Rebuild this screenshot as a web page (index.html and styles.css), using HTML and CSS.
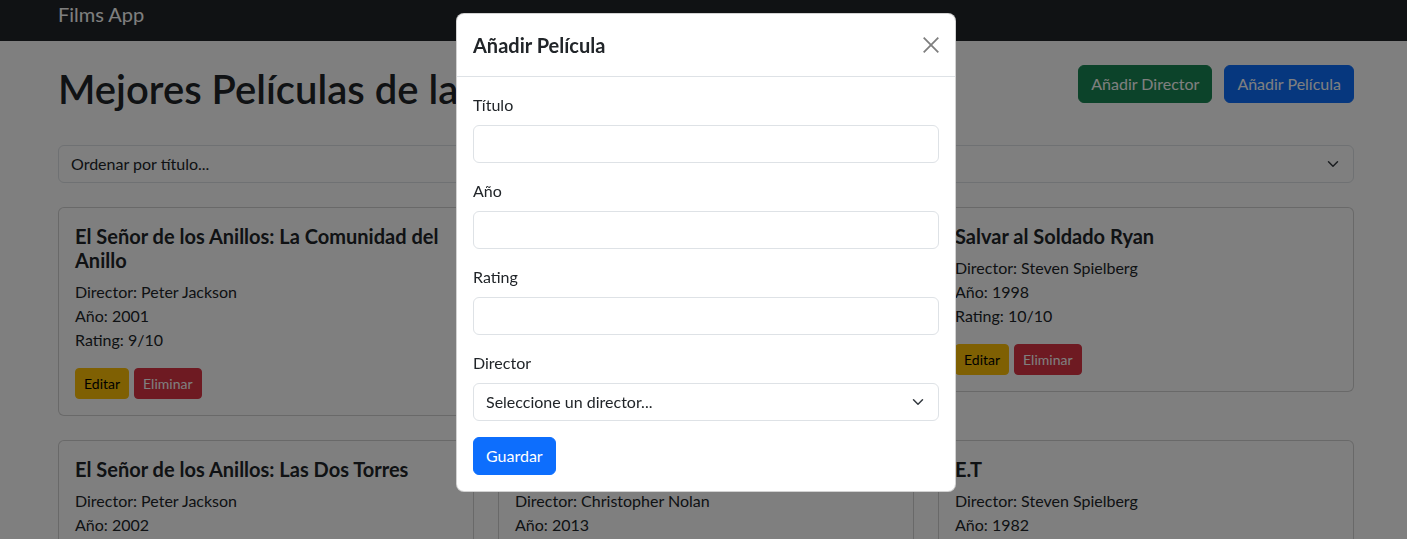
FILE: index.html
```html
<!DOCTYPE html>
<html lang="es">
<head>
<meta charset="utf-8">
<title>Films App</title>
<link rel="stylesheet" href="styles.css">
</head>
<body>
<nav class="navbar">
  <div class="container">
    <span class="brand">Films App</span>
  </div>
</nav>

<main class="container page">
  <div class="header-row">
    <h1 class="page-title">Mejores Películas de la Historia</h1>
    <div class="actions">
      <button class="btn btn-success">Añadir Director</button>
      <button class="btn btn-primary">Añadir Película</button>
    </div>
  </div>

  <div class="form-select sort-select">
    <span>Ordenar por título...</span>
    <svg class="chevron" viewBox="0 0 16 16" width="16" height="12"><path fill="none" stroke="#343a40" stroke-linecap="round" stroke-linejoin="round" stroke-width="2" d="m2 5 6 6 6-6"/></svg>
  </div>

  <div class="films">
    <div class="card">
      <h5 class="card-title">El Señor de los Anillos: La Comunidad del Anillo</h5>
      <div class="card-info">
        <p>Director: Peter Jackson</p>
        <p>Año: 2001</p>
        <p>Rating: 9/10</p>
      </div>
      <div class="card-actions">
        <button class="btn btn-sm btn-warning">Editar</button>
        <button class="btn btn-sm btn-danger">Eliminar</button>
      </div>
    </div>
    <div class="card">
      <h5 class="card-title">El Padrino</h5>
      <div class="card-info">
        <p>Director: Francis Ford Coppola</p>
        <p>Año: 1972</p>
        <p>Rating: 10/10</p>
      </div>
      <div class="card-actions">
        <button class="btn btn-sm btn-warning">Editar</button>
        <button class="btn btn-sm btn-danger">Eliminar</button>
      </div>
    </div>
    <div class="card">
      <h5 class="card-title">Salvar al Soldado Ryan</h5>
      <div class="card-info">
        <p>Director: Steven Spielberg</p>
        <p>Año: 1998</p>
        <p>Rating: 10/10</p>
      </div>
      <div class="card-actions">
        <button class="btn btn-sm btn-warning">Editar</button>
        <button class="btn btn-sm btn-danger">Eliminar</button>
      </div>
    </div>
    <div class="card">
      <h5 class="card-title">El Señor de los Anillos: Las Dos Torres</h5>
      <div class="card-info">
        <p>Director: Peter Jackson</p>
        <p>Año: 2002</p>
        <p>Rating: 9/10</p>
      </div>
      <div class="card-actions">
        <button class="btn btn-sm btn-warning">Editar</button>
        <button class="btn btn-sm btn-danger">Eliminar</button>
      </div>
    </div>
    <div class="card">
      <h5 class="card-title">Interstellar</h5>
      <div class="card-info">
        <p>Director: Christopher Nolan</p>
        <p>Año: 2013</p>
        <p>Rating: 9/10</p>
      </div>
      <div class="card-actions">
        <button class="btn btn-sm btn-warning">Editar</button>
        <button class="btn btn-sm btn-danger">Eliminar</button>
      </div>
    </div>
    <div class="card">
      <h5 class="card-title">E.T</h5>
      <div class="card-info">
        <p>Director: Steven Spielberg</p>
        <p>Año: 1982</p>
        <p>Rating: 8/10</p>
      </div>
      <div class="card-actions">
        <button class="btn btn-sm btn-warning">Editar</button>
        <button class="btn btn-sm btn-danger">Eliminar</button>
      </div>
    </div>
  </div>
</main>

<div class="backdrop"></div>

<div class="modal">
  <div class="modal-header">
    <h5 class="modal-title">Añadir Película</h5>
    <button class="btn-close" aria-label="Cerrar">
      <svg viewBox="0 0 16 16" width="16" height="16"><path d="M0.7 0.7 15.3 15.3M15.3 0.7 0.7 15.3" stroke="#000" stroke-width="1.8" fill="none"/></svg>
    </button>
  </div>
  <div class="modal-body">
    <div class="field">
      <label class="form-label">Título</label>
      <div class="form-control"></div>
    </div>
    <div class="field">
      <label class="form-label">Año</label>
      <div class="form-control"></div>
    </div>
    <div class="field">
      <label class="form-label">Rating</label>
      <div class="form-control"></div>
    </div>
    <div class="field">
      <label class="form-label">Director</label>
      <div class="form-select modal-select">
        <span>Seleccione un director...</span>
        <svg class="chevron" viewBox="0 0 16 16" width="16" height="12"><path fill="none" stroke="#343a40" stroke-linecap="round" stroke-linejoin="round" stroke-width="2" d="m2 5 6 6 6-6"/></svg>
      </div>
    </div>
    <div class="modal-actions">
      <button class="btn btn-primary">Guardar</button>
    </div>
  </div>
</div>
</body>
</html>
```

FILE: styles.css
```css
* { box-sizing: border-box; }

html, body {
  margin: 0;
  padding: 0;
  height: 100%;
  overflow: hidden;
}

body {
  font-family: Lato, "Liberation Sans", sans-serif;
  font-size: 16px;
  line-height: 1.5;
  color: #212529;
  background: #fff;
}

.container {
  width: 1296px;
  margin-left: 58px;
}

.navbar {
  background: #212529;
  height: 41px;
}

.brand {
  display: block;
  font-size: 20px;
  line-height: 28px;
  color: #fff;
}

.page {
  padding-top: 24px;
}

.header-row {
  display: flex;
  justify-content: space-between;
  align-items: flex-start;
  margin-bottom: 24px;
}

.page-title {
  margin: 0 0 8px;
  font-size: 40px;
  line-height: 48px;
  font-weight: 600;
  white-space: nowrap;
}

.actions {
  display: flex;
  gap: 12px;
}

.btn {
  font-family: inherit;
  font-size: 16px;
  line-height: 24px;
  padding: 6px 12px;
  border: 1px solid transparent;
  border-radius: 6px;
  color: #fff;
  cursor: pointer;
}

.btn-success { background: #198754; border-color: #198754; }
.btn-primary { background: #0d6efd; border-color: #0d6efd; }
.btn-warning { background: #ffc107; border-color: #ffc107; color: #000; }
.btn-danger { background: #dc3545; border-color: #dc3545; }

.btn-sm {
  font-size: 14px;
  line-height: 21px;
  padding: 4px 8px;
  border-radius: 4px;
}

.form-select {
  display: flex;
  align-items: center;
  justify-content: space-between;
  height: 38px;
  padding: 0 12px;
  border: 1px solid #dee2e6;
  border-radius: 6px;
  background: #fff;
}

.sort-select {
  margin-bottom: 24px;
}

.chevron { flex: none; }

.films {
  display: grid;
  grid-template-columns: repeat(3, 416px);
  column-gap: 24px;
  row-gap: 24px;
  align-items: start;
}

.card {
  border: 1px solid rgba(0, 0, 0, 0.175);
  border-radius: 6px;
  padding: 16px;
  background: #fff;
}

.card-title {
  margin: 0 0 8px;
  font-size: 20px;
  line-height: 24px;
  font-weight: 700;
}

.card-info {
  margin-bottom: 16px;
}

.card-info p {
  margin: 0;
}

.card-actions {
  display: flex;
  gap: 5px;
}

.backdrop {
  position: fixed;
  inset: 0;
  background: #000;
  opacity: 0.5;
}

.modal {
  position: fixed;
  top: 13px;
  left: 456px;
  width: 500px;
  background: #fff;
  border: 1px solid rgba(0, 0, 0, 0.175);
  border-radius: 8px;
}

.modal-header {
  display: flex;
  align-items: center;
  justify-content: space-between;
  padding: 16px;
  border-bottom: 1px solid #dee2e6;
}

.modal-title {
  margin: 0;
  font-size: 20px;
  line-height: 30px;
  font-weight: 700;
}

.btn-close {
  display: flex;
  padding: 4px;
  margin-right: -4px;
  border: 0;
  background: transparent;
  opacity: 0.5;
  cursor: pointer;
}

.modal-body {
  padding: 16px;
}

.field {
  margin-bottom: 16px;
}

.form-label {
  display: block;
  margin-bottom: 8px;
}

.form-control {
  height: 38px;
  border: 1px solid #dee2e6;
  border-radius: 6px;
  background: #fff;
}

.modal-actions {
  display: flex;
}
```
